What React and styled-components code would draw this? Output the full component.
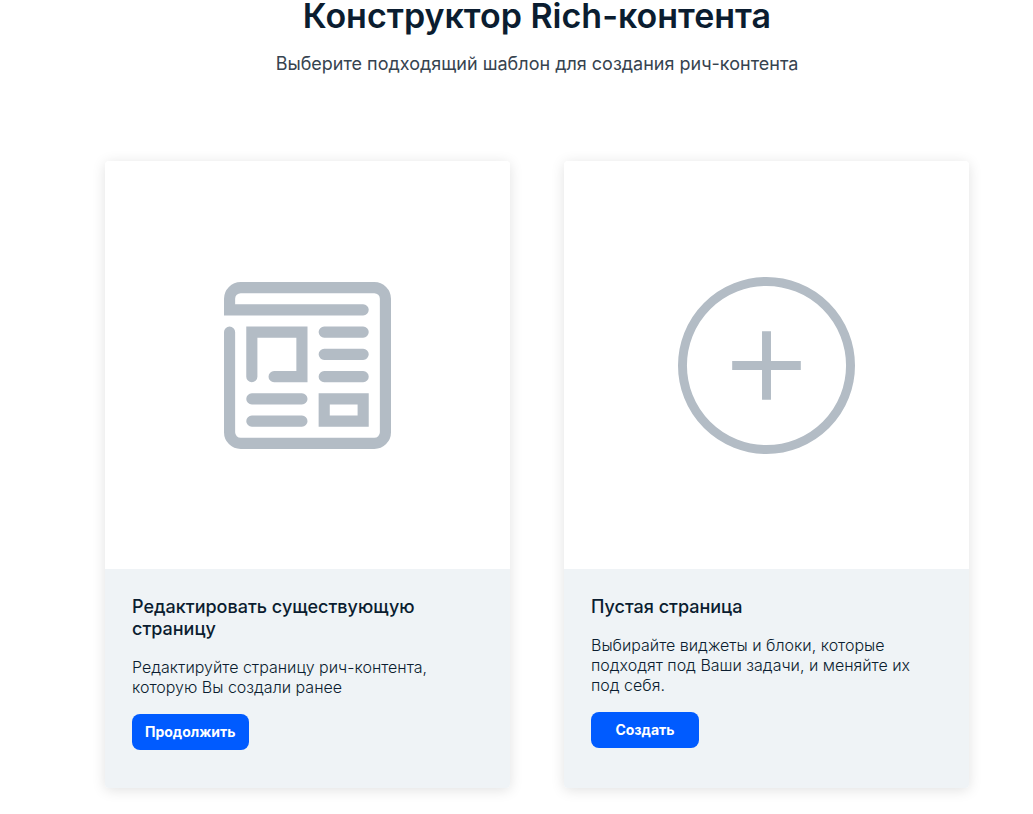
import React, { Component } from 'react'
import styled, { createGlobalStyle } from 'styled-components'

const GlobalStyle = createGlobalStyle`
    * {
        box-sizing: border-box;
    }

    body {
        margin: 0;
        background: #fff;
        color: #0b1d30;
        font-family: Inter, 'Liberation Sans', sans-serif;
    }
`

const Page = styled.main`
    padding: 0 64px 24px 105px;
`

const Header = styled.header`
    text-align: center;
    padding-bottom: 86px;
`

const Title = styled.h1`
    margin: 0;
    font-size: 34px;
    font-weight: 600;
    line-height: 32px;
`

const Subtitle = styled.p`
    margin: 20px 0 0;
    color: #36434f;
    font-size: 18px;
    font-weight: 400;
    line-height: 23px;
`

const Templates = styled.section`
    display: grid;
    grid-template-columns: repeat(2, 1fr);
    gap: 54px;
`

const Card = styled.article`
    display: flex;
    flex-direction: column;
    border-radius: 4px;
    overflow: hidden;
    box-shadow: 0 2px 14px rgba(0, 0, 0, 0.12);
`

const Preview = styled.div`
    display: flex;
    align-items: center;
    justify-content: center;
    height: 408px;
    background: #fff;
`

const Icon = styled.svg`
    width: ${p => p.$size}px;
    height: ${p => p.$size}px;
    fill: none;
    stroke: #b3bcc5;
`

const Info = styled.div`
    display: flex;
    flex: 1;
    flex-direction: column;
    align-items: flex-start;
    gap: 17px;
    padding: 27px 27px 38px;
    background: #eff3f6;
`

const CardTitle = styled.h2`
    margin: 0;
    font-size: 18px;
    font-weight: 500;
    line-height: 22px;
`

const CardText = styled.p`
    margin: 0;
    font-size: 16px;
    font-weight: 300;
    line-height: 20px;
`

const Button = styled.button`
    min-width: 108px;
    height: 36px;
    padding: 0 13px 2px;
    border: 0;
    border-radius: 8px;
    background: #005bff;
    color: #fff;
    font-family: inherit;
    font-size: 14px;
    font-weight: 700;
    cursor: pointer;
`

const NewsIcon = () => (
    <Icon $size={167} viewBox="0 0 15 15" aria-hidden="true" strokeWidth="1" strokeLinecap="round">
        <path d="M12.5 2.5H.5v-1a1 1 0 0 1 1-1h12a1 1 0 0 1 1 1v12a1 1 0 0 1-1 1h-12a1 1 0 0 1-1-1v-9" />
        <path d="M2.5 8.5v-4H7v4H4.5" />
        <path d="M9 4.5h3.5M9 6.5h3.5M9 8.5h3.5M2.5 10.5H7M2.5 12.5H7" />
        <path d="M9 10.5h3.5v2H9z" />
    </Icon>
)

const PlusIcon = () => (
    <Icon $size={177} viewBox="0 0 178 178" aria-hidden="true" strokeWidth="9">
        <circle cx="89" cy="89" r="84.5" />
        <path d="M54.5 89h69M89 54.5v69" />
    </Icon>
)

const templates = [
    {
        icon: NewsIcon,
        title: 'Редактировать существующую страницу',
        text: 'Редактируйте страницу рич-контента, которую Вы создали ранее',
        action: 'Продолжить'
    },
    {
        icon: PlusIcon,
        title: 'Пустая страница',
        text: 'Выбирайте виджеты и блоки, которые подходят под Ваши задачи, и меняйте их под себя.',
        action: 'Создать'
    }
]

class TemplateCard extends Component {
    render() {
        const { icon: Picture, title, text, action } = this.props

        return (
            <Card>
                <Preview>
                    <Picture />
                </Preview>
                <Info>
                    <CardTitle>{title}</CardTitle>
                    <CardText>{text}</CardText>
                    <Button type="button">{action}</Button>
                </Info>
            </Card>
        )
    }
}

export default class App extends Component {
    render() {
        return (
            <Page>
                <GlobalStyle />
                <Header>
                    <Title>Конструктор Rich-контента</Title>
                    <Subtitle>Выберите подходящий шаблон для создания рич-контента</Subtitle>
                </Header>
                <Templates>
                    {templates.map(template => (
                        <TemplateCard key={template.title} {...template} />
                    ))}
                </Templates>
            </Page>
        )
    }
}
